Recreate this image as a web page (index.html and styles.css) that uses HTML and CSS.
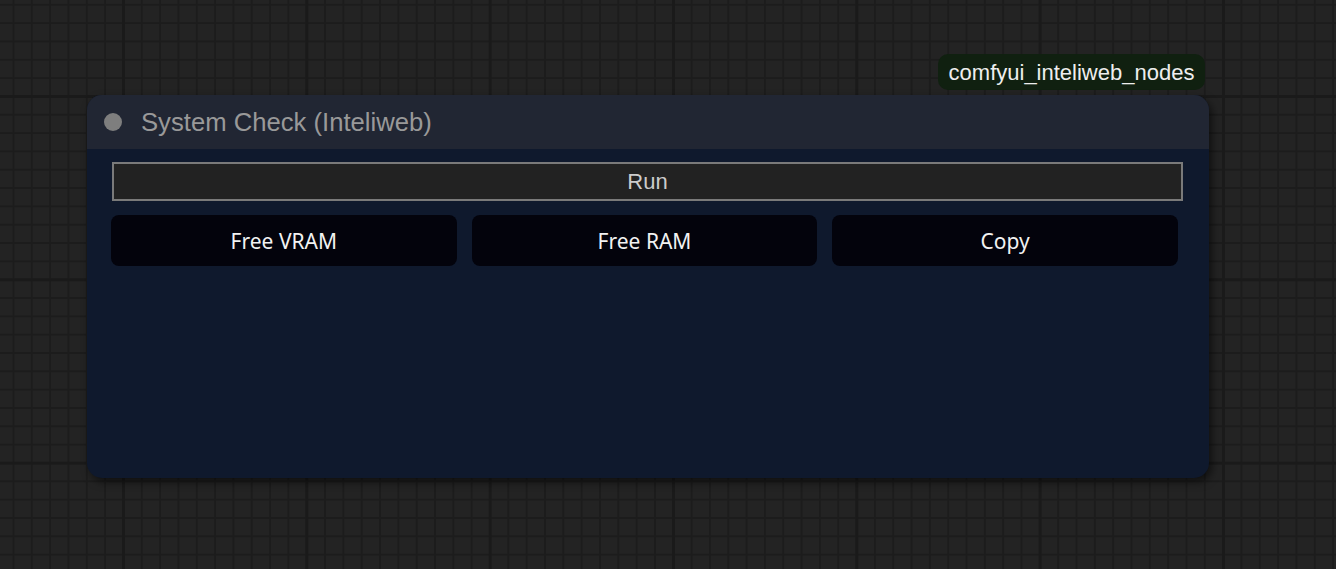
FILE: index.html
```html
<!DOCTYPE html>
<html>
<head>
<meta charset="utf-8">
<link rel="stylesheet" href="styles.css">
</head>
<body>
<div class="canvas">
  <div class="badge">comfyui_inteliweb_nodes</div>
  <div class="node">
    <div class="node-title">
      <span class="dot"></span>
      <span class="title-text">System Check (Inteliweb)</span>
    </div>
    <div class="node-body">
      <div class="run-widget">Run</div>
      <div class="btn-row">
        <button class="dom-btn">Free VRAM</button>
        <button class="dom-btn">Free RAM</button>
        <button class="dom-btn">Copy</button>
      </div>
    </div>
  </div>
</div>
</body>
</html>
```
FILE: styles.css
```css
html, body {
  margin: 0;
  padding: 0;
}
body {
  width: 1336px;
  height: 569px;
  overflow: hidden;
  background-color: #232323;
}
.canvas {
  position: relative;
  width: 1336px;
  height: 569px;
  background-image:
    linear-gradient(to right, #1a1a1a 3px, transparent 3px),
    linear-gradient(to bottom, #1a1a1a 3px, transparent 3px),
    linear-gradient(to right, #1c1c1c 1.5px, transparent 1.5px),
    linear-gradient(to bottom, #1c1c1c 1.5px, transparent 1.5px);
  background-size:
    183.333px 100%,
    100% 183.333px,
    18.333px 100%,
    100% 18.333px;
  background-position:
    122px 0,
    0 95px,
    12.5px 0,
    0 3.8px;
  font-family: "Liberation Sans", Arial, sans-serif;
}
.badge {
  position: absolute;
  left: 938px;
  top: 54px;
  width: 267px;
  height: 36px;
  box-sizing: border-box;
  padding-top: 2px;
  border-radius: 10px;
  background: #102010;
  color: #eeeeee;
  font-size: 22px;
  display: flex;
  align-items: center;
  justify-content: center;
}
.node {
  position: absolute;
  left: 87px;
  top: 95px;
  width: 1122px;
  height: 383px;
  border-radius: 15px;
  overflow: hidden;
  background: #0f192d;
  box-shadow: 3px 4px 8px rgba(0, 0, 0, 0.55);
  display: flex;
  flex-direction: column;
}
.node-title {
  height: 54px;
  flex: none;
  background: #212633;
  display: flex;
  align-items: center;
  padding-left: 17px;
  gap: 19px;
}
.dot {
  width: 18px;
  height: 18px;
  border-radius: 50%;
  background: #7e7e7e;
  flex: none;
}
.title-text {
  color: #999999;
  font-size: 25.67px;
  line-height: 1;
  padding-top: 1px;
}
.node-body {
  display: flex;
  flex-direction: column;
  padding: 13px 26px 0 25px;
}
.run-widget {
  height: 39px;
  box-sizing: border-box;
  border: 2px solid #7a7a7a;
  background: #222222;
  color: #cccccc;
  font-size: 22px;
  display: flex;
  align-items: center;
  justify-content: center;
}
.btn-row {
  display: flex;
  gap: 15px;
  margin-top: 14px;
  margin-right: 5px;
  margin-left: -1px;
}
.dom-btn {
  flex: 1;
  height: 51px;
  border: none;
  border-radius: 8px;
  background: #03030c;
  color: #f2f2f2;
  font-family: "Noto Sans", "Open Sans", sans-serif;
  font-size: 21px;
  padding: 0;
  display: flex;
  align-items: center;
  justify-content: center;
}
```
